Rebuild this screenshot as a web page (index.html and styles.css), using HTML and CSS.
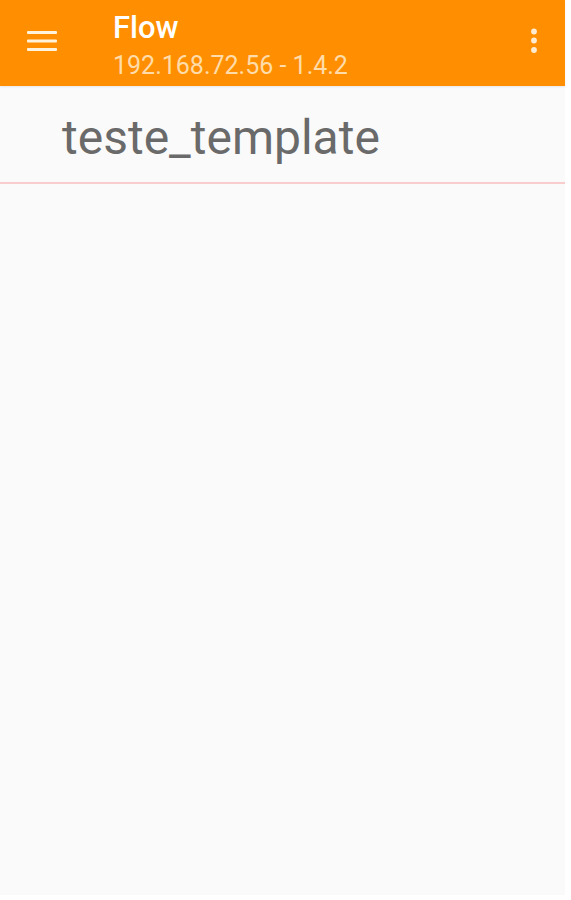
FILE: index.html
```html
<!DOCTYPE html>
<html lang="en">
<head>
  <meta charset="UTF-8">
  <meta name="viewport" content="width=device-width, initial-scale=1.0">
  <title>Flow</title>
  <link rel="stylesheet" href="styles.css">
</head>
<body>

<div class="app">
  <header class="toolbar">
    <div class="menu-btn">
      <svg width="30" height="20" viewBox="0 0 30 20">
        <rect x="0" y="0" width="30" height="3" rx="1" fill="#fff3dc"/>
        <rect x="0" y="8.5" width="30" height="3" rx="1" fill="#fff3dc"/>
        <rect x="0" y="17" width="30" height="3" rx="1" fill="#fff3dc"/>
      </svg>
    </div>
    <div class="titles">
      <div class="title">Flow</div>
      <div class="subtitle">192.168.72.56 - 1.4.2</div>
    </div>
    <div class="more-btn">
      <svg width="8" height="26" viewBox="0 0 8 26">
        <circle cx="4" cy="3.5" r="2.9" fill="#ffecd0"/>
        <circle cx="4" cy="12.5" r="2.9" fill="#ffecd0"/>
        <circle cx="4" cy="22" r="2.9" fill="#ffecd0"/>
      </svg>
    </div>
  </header>

  <section class="list">
    <div class="list-item">teste_template</div>
  </section>
</div>

</body>
</html>
```

FILE: styles.css
```css
body {
  margin: 0;
  padding: 0;
  background: #ffffff;
  font-family: Roboto, "Noto Sans", Arial, sans-serif;
}

.app {
  width: 565px;
  height: 895px;
  background: #fafafa;
}

/* Toolbar */
.toolbar {
  height: 86px;
  background: #ff8f00;
  display: flex;
  align-items: flex-start;
  box-shadow: 0 1px 2px rgba(0, 0, 0, 0.08);
}

.menu-btn {
  width: 30px;
  height: 20px;
  margin-left: 27px;
  margin-top: 31px;
  display: flex;
}

.titles {
  margin-left: 56px;
  padding-top: 10px;
  flex: 1;
}

.title {
  color: #ffffff;
  font-size: 31px;
  font-weight: 500;
  line-height: 36px;
}

.subtitle {
  margin-top: 5px;
  color: #ffdcaa;
  font-size: 25px;
  line-height: 30px;
}

.more-btn {
  width: 8px;
  height: 26px;
  margin-right: 27px;
  margin-top: 28px;
  display: flex;
}

/* List */
.list-item {
  height: 55px;
  padding: 24px 0 17px 62px;
  color: #6a6a6a;
  font-size: 48px;
  line-height: 55px;
  border-bottom: 2px solid #f9cdcd;
}
```
